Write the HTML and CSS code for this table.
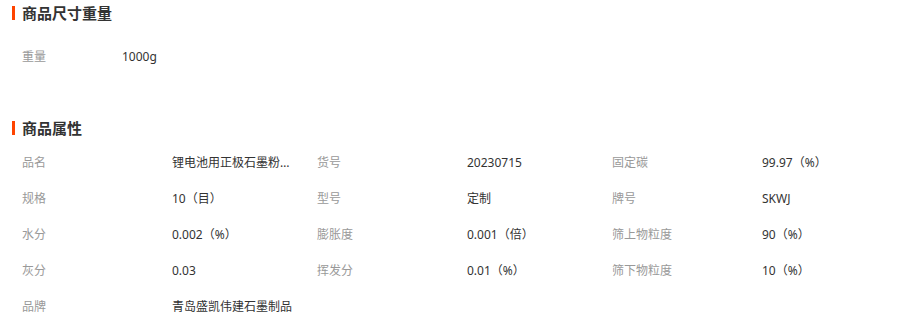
FILE: index.html
```html
<!DOCTYPE html>
<html lang="zh-CN">
<head>
<meta charset="utf-8">
<title>商品参数</title>
<link rel="stylesheet" href="styles.css">
</head>
<body>
<div class="page">
  <section class="block block-size">
    <h2 class="block-title">商品尺寸重量</h2>
    <div class="size-row">
      <span class="label label-narrow">重量</span>
      <span class="value">1000g</span>
    </div>
  </section>

  <section class="block block-attrs">
    <h2 class="block-title">商品属性</h2>
    <div class="attr-grid">
      <div class="attr"><span class="label">品名</span><span class="value trunc" title="锂电池用正极石墨粉体">锂电池用正极石墨粉体</span></div>
      <div class="attr"><span class="label">货号</span><span class="value">20230715</span></div>
      <div class="attr"><span class="label">固定碳</span><span class="value">99.97（%）</span></div>

      <div class="attr"><span class="label">规格</span><span class="value">10（目）</span></div>
      <div class="attr"><span class="label">型号</span><span class="value">定制</span></div>
      <div class="attr"><span class="label">牌号</span><span class="value">SKWJ</span></div>

      <div class="attr"><span class="label">水分</span><span class="value">0.002（%）</span></div>
      <div class="attr"><span class="label">膨胀度</span><span class="value">0.001（倍）</span></div>
      <div class="attr"><span class="label">筛上物粒度</span><span class="value">90（%）</span></div>

      <div class="attr"><span class="label">灰分</span><span class="value">0.03</span></div>
      <div class="attr"><span class="label">挥发分</span><span class="value">0.01（%）</span></div>
      <div class="attr"><span class="label">筛下物粒度</span><span class="value">10（%）</span></div>

      <div class="attr attr-wide"><span class="label">品牌</span><span class="value">青岛盛凯伟建石墨制品</span></div>
    </div>
  </section>
</div>
</body>
</html>
```

FILE: styles.css
```css
* {
  box-sizing: border-box;
}

html, body {
  margin: 0;
  padding: 0;
  background: #ffffff;
}

body {
  font-family: "Noto Sans", "Noto Sans CJK SC", sans-serif;
  font-size: 12px;
  color: #333333;
}

.page {
  width: 924px;
  padding: 0 0 0 12px;
}

.block-title {
  display: flex;
  align-items: center;
  gap: 7px;
  height: 26px;
  margin: 0;
  font-size: 15px;
  font-weight: bold;
  color: #333333;
  line-height: 26px;
}

.block-title::before {
  content: "";
  display: block;
  width: 3px;
  height: 14px;
  background: #ff4400;
}

.size-row {
  display: flex;
  align-items: center;
  height: 36px;
  margin-top: 12px;
  padding-left: 10px;
}

.block-attrs {
  margin-top: 41px;
}

.attr-grid {
  display: grid;
  grid-template-columns: repeat(3, 295px);
  grid-auto-rows: 36px;
  margin-top: 3px;
  padding-left: 10px;
}

.attr {
  display: flex;
  align-items: center;
}

.label {
  width: 150px;
  flex: none;
  color: #999999;
}

.label-narrow {
  width: 100px;
}

.value {
  color: #333333;
  white-space: nowrap;
}

.trunc {
  display: block;
  width: 118px;
  overflow: hidden;
  text-overflow: ellipsis;
}

.attr-wide {
  grid-column: span 3;
}
```
